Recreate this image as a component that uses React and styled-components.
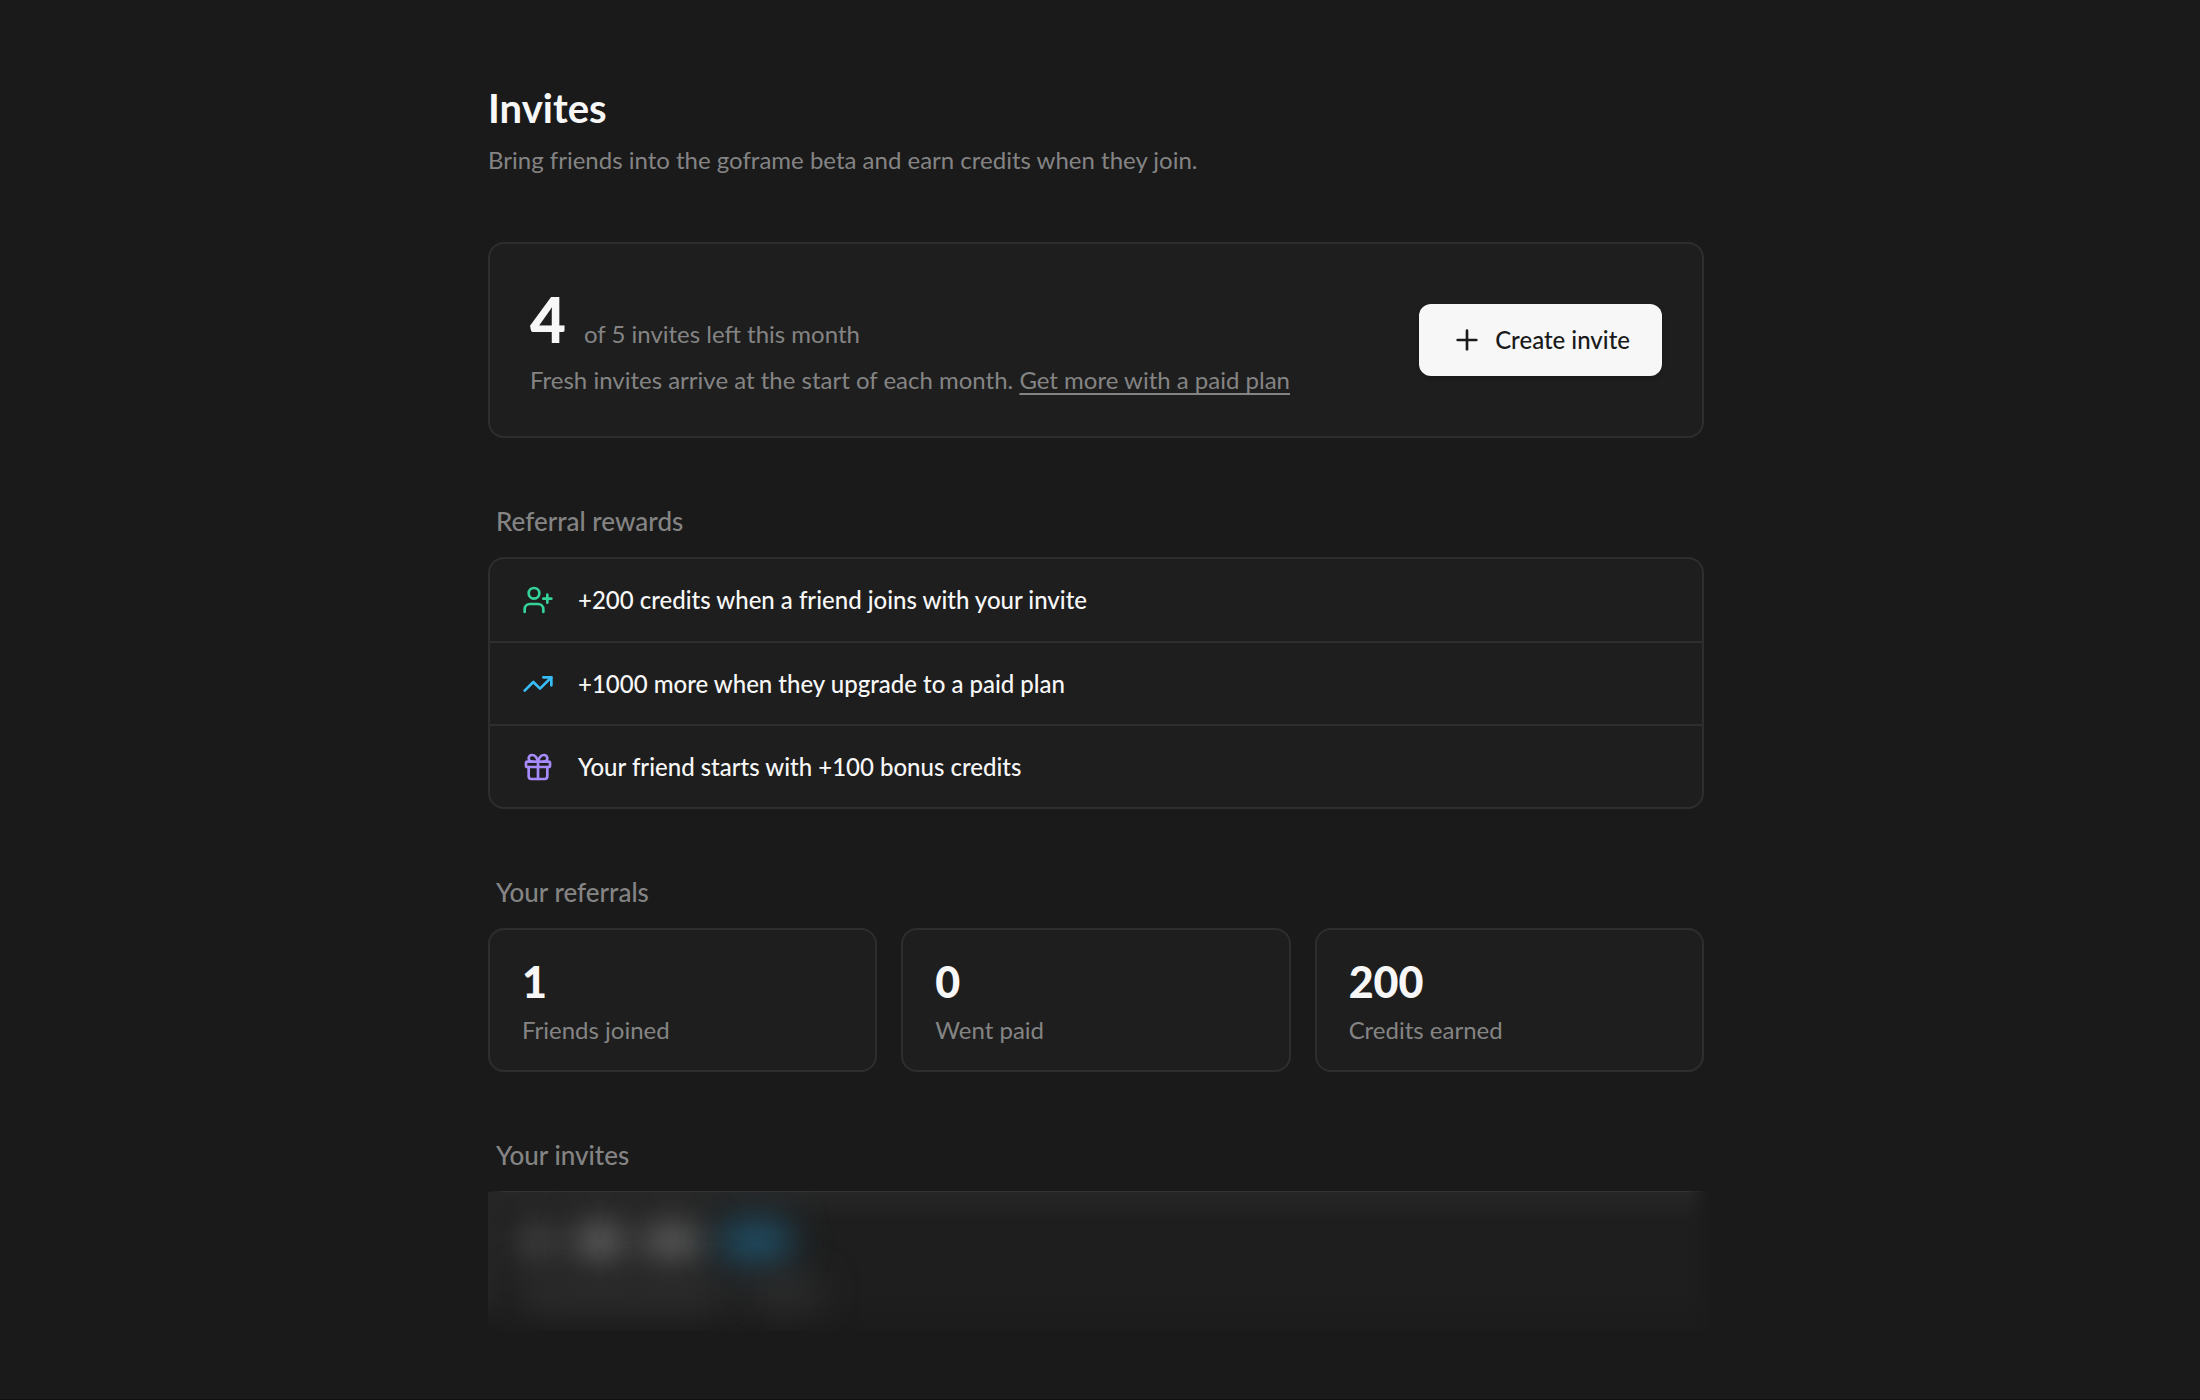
import React from 'react'
import styled, { createGlobalStyle } from 'styled-components'
import { Gift, Plus, TrendingUp, UserPlus } from 'lucide-react'

const GlobalStyle = createGlobalStyle`
  * {
    box-sizing: border-box;
  }
  body {
    margin: 0;
    background: #1a1a1a;
    color: #f7f7f7;
    font-family: Lato, 'Liberation Sans', sans-serif;
    font-size: 24px;
    line-height: 36px;
  }
  h1, h2, p, ul, dl, dd {
    margin: 0;
    padding: 0;
  }
`
const Page = styled.div`
  min-height: 100vh;
  padding: 84px 28px 68px 20px;
  border-bottom: 1px solid #150d14;
`
const Column = styled.main`
  display: flex;
  flex-direction: column;
  gap: 64px;
  max-width: 1216px;
  margin: 0 auto;
`
const Header = styled.header`
  display: flex;
  flex-direction: column;
  gap: 10px;
`
const PageTitle = styled.h1`
  font-size: 40px;
  line-height: 48px;
  font-weight: 700;
`
const Muted = styled.p`
  color: #848484;
`
const Card = styled.div`
  background: #1e1e1e;
  border: 2px solid #2e2e2e;
  border-radius: 16px;
`
const QuotaCard = styled(Card)`
  display: flex;
  align-items: center;
  justify-content: space-between;
  gap: 32px;
  padding: 38px 40px;
`
const Quota = styled.div`
  display: flex;
  align-items: baseline;
  gap: 18px;
  margin-bottom: 6px;
`
const QuotaNumber = styled.strong`
  font-size: 62px;
  line-height: 74px;
  font-weight: 900;
`
const PlanLink = styled.a`
  color: inherit;
  text-decoration: underline;
  text-decoration-thickness: 2px;
  text-underline-offset: 4px;
`
const CreateButton = styled.button`
  display: flex;
  align-items: center;
  gap: 12px;
  padding: 18px 32px;
  border: 0;
  border-radius: 12px;
  background: #f7f7f7;
  color: #1a1a1a;
  font: inherit;
  font-family: 'Lato Medium', Lato, sans-serif;
  font-weight: 500;
  white-space: nowrap;
  box-shadow: 0 2px 4px rgba(0, 0, 0, 0.2);
  cursor: pointer;
`
const Section = styled.section`
  display: flex;
  flex-direction: column;
  gap: 16px;
`
const SectionTitle = styled.h2`
  padding-left: 8px;
  color: #848484;
  font-family: 'Lato Medium', Lato, sans-serif;
  font-size: 26px;
  line-height: 39px;
  font-weight: 500;
`
const RewardList = styled(Card).attrs({ as: 'ul' })`
  list-style: none;
`
const Reward = styled.li`
  display: flex;
  align-items: center;
  gap: 24px;
  padding: 23px 32px 22px;
  font-family: 'Lato Medium', Lato, sans-serif;
  font-weight: 500;
  & + & {
    border-top: 2px solid #2e2e2e;
  }
  &:first-child {
    padding-bottom: 23px;
  }
  svg {
    flex: none;
    color: ${(p) => p.$color};
  }
`
const Stats = styled.dl`
  display: grid;
  grid-template-columns: repeat(3, 1fr);
  gap: 24px;
`
const Stat = styled(Card)`
  display: flex;
  flex-direction: column-reverse;
  padding: 22px 32px;
`
const StatLabel = styled.dt`
  color: #848484;
`
const StatValue = styled.dd`
  font-size: 43px;
  line-height: 60px;
  font-weight: 900;
`

// invite codes stay hidden behind a frosted panel
const Frosted = styled.div`
  display: flex;
  flex-direction: column;
  gap: 16px;
  height: 140px;
  margin-right: -4px;
  padding: 30px 30px;
  overflow: hidden;
  background:
    linear-gradient(to right, #1a1a1a, transparent 16px, transparent calc(100% - 22px), #1a1a1a) 0 0 / 100% 1px no-repeat,
    linear-gradient(#333, #333) 0 0 / 100% 1px no-repeat,
    linear-gradient(to left, #1b1b1b, rgba(27, 27, 27, 0) 22px),
    linear-gradient(to bottom, rgba(26, 26, 26, 0) 100px, #1b1b1b),
    linear-gradient(to bottom, #272727, rgba(39, 39, 39, 0) 30px),
    linear-gradient(to right, #252525, rgba(37, 37, 37, 0) 22px),
    #1e1e1e;
`
const FrostedRow = styled.div`
  display: flex;
  align-items: center;
  gap: 20px;
`
const Smudge = styled.span`
  width: ${(p) => p.$width}px;
  height: ${(p) => p.$height}px;
  border-radius: 8px;
  background: ${(p) => p.$color};
  filter: blur(18px);
`

const rewards = [
  { icon: UserPlus, color: '#34d399', text: '+200 credits when a friend joins with your invite' },
  { icon: TrendingUp, color: '#38bdf8', text: '+1000 more when they upgrade to a paid plan' },
  { icon: Gift, color: '#a78bfa', text: 'Your friend starts with +100 bonus credits' },
]
const stats = [
  { value: 1, label: 'Friends joined' },
  { value: 0, label: 'Went paid' },
  { value: 200, label: 'Credits earned' },
]

export default function App() {
  return (
    <Page>
      <GlobalStyle />
      <Column>
        <Header>
          <PageTitle>Invites</PageTitle>
          <Muted>Bring friends into the goframe beta and earn credits when they join.</Muted>
        </Header>

        <QuotaCard>
          <div>
            <Quota>
              <QuotaNumber>4</QuotaNumber>
              <Muted>of 5 invites left this month</Muted>
            </Quota>
            <Muted>
              Fresh invites arrive at the start of each month.{' '}
              <PlanLink href="#plans">Get more with a paid plan</PlanLink>
            </Muted>
          </div>
          <CreateButton type="button">
            <Plus size={32} />
            Create invite
          </CreateButton>
        </QuotaCard>

        <Section>
          <SectionTitle>Referral rewards</SectionTitle>
          <RewardList>
            {rewards.map(({ icon: Icon, color, text }) => (
              <Reward key={text} $color={color}>
                <Icon size={32} />
                {text}
              </Reward>
            ))}
          </RewardList>
        </Section>

        <Section>
          <SectionTitle>Your referrals</SectionTitle>
          <Stats>
            {stats.map((stat) => (
              <Stat key={stat.label}>
                <StatLabel>{stat.label}</StatLabel>
                <StatValue>{stat.value}</StatValue>
              </Stat>
            ))}
          </Stats>
        </Section>

        <Section>
          <SectionTitle>Your invites</SectionTitle>
          <Frosted aria-hidden="true">
            <FrostedRow>
              <Smudge $width={40} $height={38} $color="#4a4a4a" />
              <Smudge $width={44} $height={38} $color="#707070" />
              <Smudge $width={60} $height={38} $color="#626262" />
              <Smudge $width={68} $height={42} $color="#21526a" />
            </FrostedRow>
            <FrostedRow>
              <Smudge $width={210} $height={28} $color="#313131" />
              <Smudge $width={72} $height={28} $color="#313131" />
            </FrostedRow>
          </Frosted>
        </Section>
      </Column>
    </Page>
  )
}
